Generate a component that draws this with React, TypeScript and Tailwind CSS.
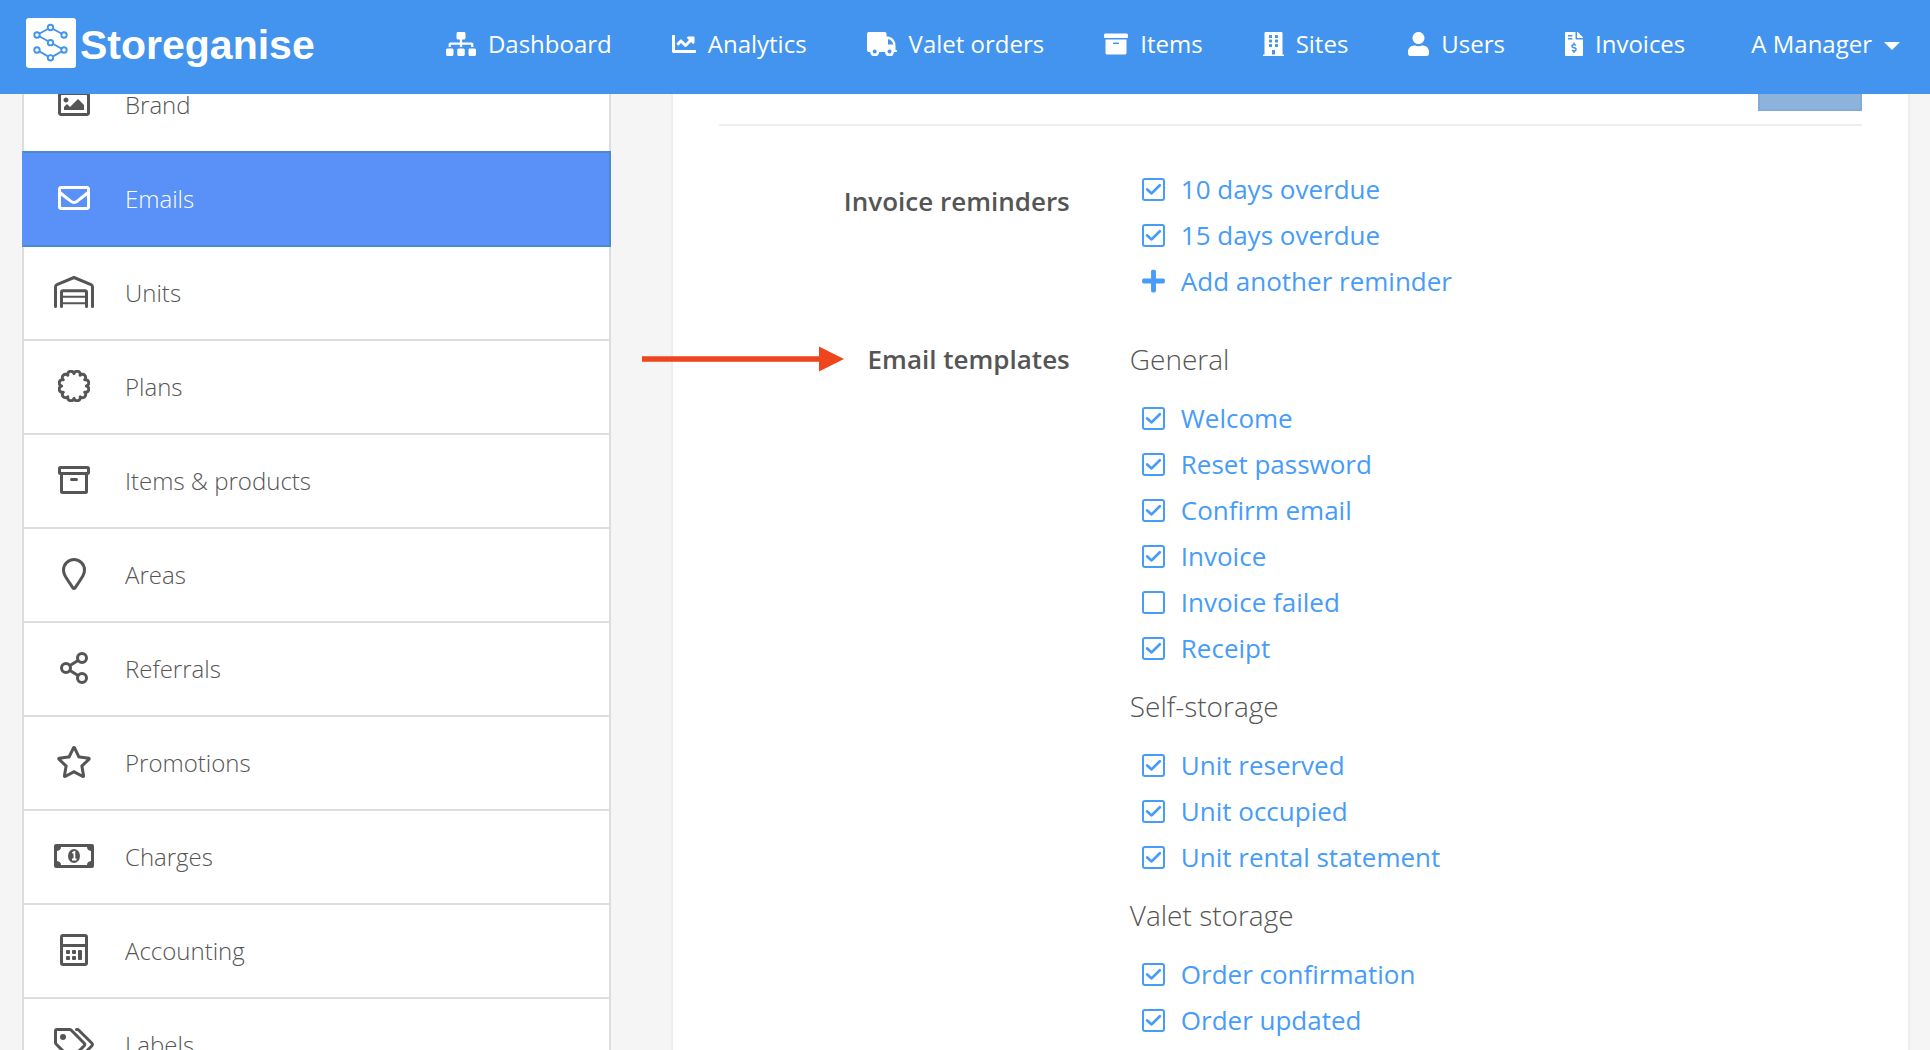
import React from "react";
import {
  FaArchive,
  FaBuilding,
  FaChartLine,
  FaFileInvoiceDollar,
  FaPlus,
  FaRegEnvelope,
  FaRegImage,
  FaRegStar,
  FaSitemap,
  FaUser,
} from "react-icons/fa";

const line = {
  fill: "none",
  stroke: "currentColor",
  strokeWidth: 3,
  strokeLinecap: "round",
  strokeLinejoin: "round",
} as const;

function Logo() {
  const nodes = [
    [24.5, 9.5],
    [11, 17],
    [38, 17],
    [24.5, 24.7],
    [11, 32],
    [38, 32],
    [24.5, 39.8],
  ];
  return (
    <a href="#home" className="flex items-center gap-1 text-white" aria-label="Storeganise">
      <svg viewBox="0 0 50 50" className="h-[50px] w-[50px]" aria-hidden="true">
        <rect width="50" height="50" rx="3" fill="#fff" />
        <g fill="#fff" stroke="#4294ee" strokeWidth="1.9">
          <path d="M11 17L24.5 9.5L38 17M11 17L38 32L24.5 39.8L11 32" fill="none" />
          {nodes.map(([x, y]) => (
            <circle key={`${x}-${y}`} cx={x} cy={y} r="2.7" />
          ))}
        </g>
      </svg>
      <span className="pt-1 font-['Liberation_Sans',Arial,sans-serif] text-[41px] leading-[50px] font-bold">
        Storeganise
      </span>
    </a>
  );
}

function TruckIcon() {
  return (
    <svg viewBox="0 0 30 24" className="h-6 w-[30px]" aria-hidden="true">
      <path
        fill="currentColor"
        fillRule="evenodd"
        d="M1.8 0H17.7Q19.5 0 19.5 1.8V4.5H21.5Q28.5 6.5 28.5 14V18H29.2Q30 18 30 18.8V19.2Q30 20 29.2 20H27A4.5 4.5 0 0 1 18 20H12.2A4.5 4.5 0 0 1 3.2 20H1.8Q0 20 0 18.2V1.8Q0 0 1.8 0ZM21 7V12.5H26.3Q25.4 8.4 21 7ZM7.7 17.5A2 2 0 1 0 7.7 21.5A2 2 0 1 0 7.7 17.5ZM22.5 17.5A2 2 0 1 0 22.5 21.5A2 2 0 1 0 22.5 17.5Z"
      />
    </svg>
  );
}

function WarehouseIcon() {
  return (
    <svg viewBox="0 0 40 32" className="h-8 w-10" aria-hidden="true">
      <g {...line}>
        <path d="M1.5 30.5V11Q1.5 9.2 3 8.6L20 1.5L37 8.6Q38.5 9.2 38.5 11V30.5" />
        <path d="M7.5 30.5V16.2Q7.5 14.7 9 14.7H31Q32.5 14.7 32.5 16.2V30.5" />
        <path d="M8 20.8H32M8 27.2H32" strokeWidth="2" />
      </g>
    </svg>
  );
}

function scallopPath() {
  const point = (i: number) => {
    const angle = (i * Math.PI) / 6;
    return `${(16 + 12.4 * Math.sin(angle)).toFixed(2)} ${(16 - 12.4 * Math.cos(angle)).toFixed(2)}`;
  };
  let d = `M${point(0)}`;
  for (let i = 1; i <= 12; i++) d += `A3.2 3.2 0 0 1 ${point(i)}`;
  return `${d}Z`;
}

function BadgeIcon() {
  return (
    <svg viewBox="0 0 32 32" className="h-8 w-8" aria-hidden="true">
      <path {...line} d={scallopPath()} />
    </svg>
  );
}

function BoxIcon() {
  return (
    <svg viewBox="0 0 32 28" className="h-7 w-8" aria-hidden="true">
      <g {...line}>
        <rect x="1.5" y="1.5" width="29" height="6" rx="1" />
        <path d="M3.5 8V25.5Q3.5 26.5 4.5 26.5H27.5Q28.5 26.5 28.5 25.5V8" />
        <path d="M13.5 13.5H18.5" />
      </g>
    </svg>
  );
}

function PinIcon() {
  return (
    <svg viewBox="0 0 24 32" className="h-8 w-6" aria-hidden="true">
      <path
        {...line}
        d="M12 1.5A10.5 10.5 0 0 0 1.5 12C1.5 16.2 3 18 10.8 29.7Q12 31.2 13.2 29.7C21 18 22.5 16.2 22.5 12A10.5 10.5 0 0 0 12 1.5Z"
      />
    </svg>
  );
}

function ShareIcon() {
  return (
    <svg viewBox="0 0 28 32" className="h-8 w-7" aria-hidden="true">
      <g {...line}>
        <circle cx="22" cy="6" r="4.5" />
        <circle cx="6" cy="16" r="4.5" />
        <circle cx="22" cy="26" r="4.5" />
        <path d="M10 13.5L18 8.5M10 18.5L18 23.5" />
      </g>
    </svg>
  );
}

function BanknoteIcon() {
  return (
    <svg viewBox="0 0 40 24" className="h-6 w-10" aria-hidden="true">
      <path
        fill="currentColor"
        fillRule="evenodd"
        d="M2 0H38Q40 0 40 2V22Q40 24 38 24H2Q0 24 0 22V2Q0 0 2 0ZM7 3Q7 6.5 3 7V17Q7 17.5 7 21H33Q33 17.5 37 17V7Q33 6.5 33 3Z"
      />
      <ellipse cx="20" cy="12" rx="6" ry="7" fill="currentColor" />
      <path d="M18.3 9L20.4 8V15.5M18 15.5H22.5" fill="none" stroke="#fff" strokeWidth="1.8" />
    </svg>
  );
}

function CalculatorIcon() {
  return (
    <svg viewBox="0 0 28 32" className="h-8 w-7" aria-hidden="true">
      <rect {...line} x="1.5" y="1.5" width="25" height="29" rx="1.5" />
      <path {...line} d="M2 11.5H26" />
      <g fill="currentColor">
        <rect x="6" y="16" width="4" height="4" rx="1" />
        <rect x="12" y="16" width="4" height="4" rx="1" />
        <rect x="6" y="22" width="4" height="4" rx="1" />
        <rect x="12" y="22" width="4" height="4" rx="1" />
        <rect x="18" y="16" width="4" height="10" rx="1" />
      </g>
    </svg>
  );
}

function TagsIcon() {
  return (
    <svg viewBox="0 0 40 32" className="h-8 w-10" aria-hidden="true">
      <path
        {...line}
        d="M1.5 3V14.5Q1.5 15.5 2.3 16.3L15.5 29.5Q17 31 18.5 29.5L30 18Q31.5 16.5 30 15L17.3 2.3Q16.5 1.5 15.5 1.5H3Q1.5 1.5 1.5 3Z"
      />
      <path {...line} d="M22.5 1.5H23.2Q24 1.5 24.8 2.3L37.7 15Q39.2 16.5 37.7 18L26 29.8" />
      <circle cx="9" cy="9" r="3" fill="currentColor" />
    </svg>
  );
}

const navItems = [
  { label: "Dashboard", icon: <FaSitemap className="h-6 w-[30px]" /> },
  { label: "Analytics", icon: <FaChartLine className="h-6 w-6" /> },
  { label: "Valet orders", icon: <TruckIcon /> },
  { label: "Items", icon: <FaArchive className="h-6 w-6" /> },
  { label: "Sites", icon: <FaBuilding className="h-6 w-[21px]" /> },
  { label: "Users", icon: <FaUser className="h-6 w-[21px]" /> },
  { label: "Invoices", icon: <FaFileInvoiceDollar className="h-6 w-[18px]" /> },
];

const sidebarItems = [
  { label: "Brand", icon: <FaRegImage className="h-8 w-8" /> },
  { label: "Emails", icon: <FaRegEnvelope className="h-8 w-8" />, active: true },
  { label: "Units", icon: <WarehouseIcon /> },
  { label: "Plans", icon: <BadgeIcon /> },
  { label: "Items & products", icon: <BoxIcon /> },
  { label: "Areas", icon: <PinIcon /> },
  { label: "Referrals", icon: <ShareIcon /> },
  { label: "Promotions", icon: <FaRegStar className="h-8 w-9" /> },
  { label: "Charges", icon: <BanknoteIcon /> },
  { label: "Accounting", icon: <CalculatorIcon /> },
  { label: "Labels", icon: <TagsIcon /> },
];

const templateGroups = [
  {
    title: "General",
    items: [
      { label: "Welcome", on: true },
      { label: "Reset password", on: true },
      { label: "Confirm email", on: true },
      { label: "Invoice", on: true },
      { label: "Invoice failed", on: false },
      { label: "Receipt", on: true },
    ],
  },
  {
    title: "Self-storage",
    items: [
      { label: "Unit reserved", on: true },
      { label: "Unit occupied", on: true },
      { label: "Unit rental statement", on: true },
    ],
  },
  {
    title: "Valet storage",
    items: [
      { label: "Order confirmation", on: true },
      { label: "Order updated", on: true },
    ],
  },
];

function Header() {
  return (
    <header className="relative z-20 flex h-[94px] shrink-0 items-center justify-between bg-[#4294ee] pr-[30px] pb-2 pl-[26px]">
      <Logo />
      <nav className="flex items-center gap-[66px] pt-[2px] text-2xl text-white">
        <ul className="flex items-center gap-[60px]">
          {navItems.map((item) => (
            <li key={item.label}>
              <a href="#nav" className="flex items-center gap-3 whitespace-nowrap">
                {item.icon}
                {item.label}
              </a>
            </li>
          ))}
        </ul>
        <button type="button" className="flex items-center gap-3 whitespace-nowrap">
          A Manager
          <span className="mt-1 border-x-8 border-t-8 border-x-transparent border-t-white" />
        </button>
      </nav>
    </header>
  );
}

function Sidebar() {
  return (
    <aside className="-mt-[37px]">
      <ul>
        {sidebarItems.map((item) => (
          <li key={item.label} className="-mt-[2px] first:mt-0">
            <a
              href="#settings"
              className={
                item.active
                  ? "relative z-10 flex h-24 items-center gap-[31px] border-2 border-[#4a8acb] border-l-[#5991f9] bg-[#5991f9] pb-[2px] pl-[30px] text-2xl font-light text-white"
                  : "flex h-24 items-center gap-[31px] border-2 border-[#dddddd] bg-white pb-[2px] pl-[30px] text-2xl font-light text-[#555555]"
              }
            >
              <span className="flex w-10 justify-center">{item.icon}</span>
              <span className="pt-[2px]">{item.label}</span>
            </a>
          </li>
        ))}
      </ul>
    </aside>
  );
}

function CheckRow({ label, on }: { label: string; on: boolean }) {
  return (
    <li>
      <label className="flex h-[46px] w-fit items-center gap-4 pl-3 text-[26px] text-[#469cf8]">
        <span className="relative h-[23px] w-[23px]">
          <input
            type="checkbox"
            defaultChecked={on}
            className="peer block h-[23px] w-[23px] appearance-none rounded-[3px] border-2 border-[#469cf8]"
          />
          <svg
            viewBox="0 0 23 23"
            className="pointer-events-none absolute inset-0 hidden h-[23px] w-[23px] peer-checked:block"
            aria-hidden="true"
          >
            <path
              d="M5.2 11.4L9.6 15.4L17.8 7.2"
              fill="none"
              stroke="currentColor"
              strokeWidth="2.7"
              strokeLinecap="round"
              strokeLinejoin="round"
            />
          </svg>
        </span>
        {label}
      </label>
    </li>
  );
}

function Arrow() {
  return (
    <svg
      viewBox="0 0 202 26"
      className="absolute top-2.5 right-full mr-6 h-[26px] w-[202px]"
      aria-hidden="true"
    >
      <path d="M0 10.3H177V0.5L202 13L177 25.5V15.7H0Z" fill="#ee451d" />
    </svg>
  );
}

export default function App() {
  return (
    <div className="flex h-screen flex-col overflow-hidden bg-[#f5f5f5] font-['Open_Sans','Noto_Sans',sans-serif] text-[#555555]">
      <Header />
      <div className="grid min-h-0 flex-1 grid-cols-[minmax(0,19fr)_minmax(0,40fr)] gap-[60px] pr-5 pl-[22px]">
        <Sidebar />
        <main className="-mt-[37px] border-2 border-[#eeeeee] bg-white px-[46px]">
          <div className="flex justify-end border-b-2 border-[#eeeeee] pb-[13px]">
            <button
              type="button"
              aria-label="Save"
              className="h-[52px] w-[104px] border-2 border-[#84aad7] bg-[#8db2dc]"
            />
          </div>

          <section className="mt-10 grid grid-cols-3">
            <h2 className="pt-3 pr-[30px] text-right text-[26px] leading-[46px] font-semibold">
              Invoice reminders
            </h2>
            <ul className="col-span-2 pl-[30px]">
              <CheckRow label="10 days overdue" on />
              <CheckRow label="15 days overdue" on />
              <li>
                <button
                  type="button"
                  className="flex h-[46px] items-center gap-4 pl-3 text-[26px] text-[#469cf8]"
                >
                  <FaPlus className="h-[26px] w-[23px]" />
                  Add another reminder
                </button>
              </li>
            </ul>
          </section>

          <section className="mt-5 grid grid-cols-3">
            <h2 className="pt-3 pr-[30px] text-right text-[26px] leading-[46px] font-semibold">
              <span className="relative inline-block">
                <Arrow />
                Email templates
              </span>
            </h2>
            <div className="col-span-2 pl-[30px]">
              {templateGroups.map((group) => (
                <div key={group.title}>
                  <h3 className="pt-3 pb-[13px] text-[28px] leading-[46px] font-light">
                    {group.title}
                  </h3>
                  <ul>
                    {group.items.map((item) => (
                      <CheckRow key={item.label} {...item} />
                    ))}
                  </ul>
                </div>
              ))}
            </div>
          </section>
        </main>
      </div>
    </div>
  );
}
